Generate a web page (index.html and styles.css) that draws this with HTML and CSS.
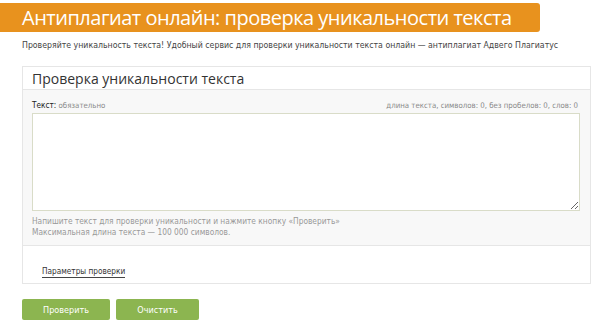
FILE: index.html
```html
<!DOCTYPE html>
<html lang="ru">
<head>
  <meta charset="UTF-8" />
  <title>Антиплагиат онлайн</title>
  <link rel="stylesheet" href="styles.css">
</head>
<body>

<h1 class="title">Антиплагиат онлайн: проверка уникальности текста</h1>
<p class="lead">Проверяйте уникальность текста! Удобный сервис для проверки уникальности текста онлайн — антиплагиат Адвего Плагиатус</p>

<div class="card">
  <div class="card-head">Проверка уникальности текста</div>
  <div class="card-body">
    <div class="field-top">
      <span class="label"><b>Текст:</b> обязательно</span>
      <span class="counter">длина текста, символов: 0, без пробелов: 0, слов: 0</span>
    </div>
    <textarea class="text" autofocus></textarea>
    <p class="hint">Напишите текст для проверки уникальности и нажмите кнопку «Проверить»<br>Максимальная длина текста — 100 000 символов.</p>
  </div>
  <div class="card-foot">
    <a href="#" class="params">Параметры проверки</a>
  </div>
</div>

<div class="actions">
  <button class="btn btn-check">Проверить</button>
  <button class="btn btn-clear">Очистить</button>
</div>

</body>
</html>
```

FILE: styles.css
```css
* { box-sizing: border-box; }
body {
  margin: 0;
  padding: 3px 6px 0 0;
  background: #fff;
  font-family: "DejaVu Sans Condensed", "DejaVu Sans", sans-serif;
  color: #333;
}
.title {
  margin: 0;
  width: 540px;
  height: 29px;
  padding: 0 0 0 22px;
  background: #e8921e;
  border-radius: 0 3px 3px 0;
  color: #fff;
  font-family: "Open Sans", sans-serif;
  font-weight: 400;
  font-size: 20px;
  line-height: 29px;
  letter-spacing: -0.5px;
  white-space: nowrap;
  overflow: hidden;
}
.lead {
  margin: 7px 0 0 22px;
  font-size: 8.7px;
  line-height: 12px;
  color: #444;
  white-space: nowrap;
}
.card {
  margin: 15px 0 0 22px;
  border: 1px solid #e6e6e6;
  background: #fff;
}
.card-head {
  height: 23px;
  padding: 0 0 0 9px;
  font-family: "Open Sans", sans-serif;
  font-size: 14px;
  line-height: 23px;
  color: #333;
  border-bottom: 1px solid #e6e6e6;
}
.card-body {
  background: #f8f8f8;
  padding: 8px 10px 7px 9px;
  border-bottom: 1px solid #e6e6e6;
}
.field-top {
  display: flex;
  justify-content: space-between;
  align-items: flex-end;
  height: 12px;
  font-size: 7.8px;
  color: #888;
}
.label b {
  font-weight: 400;
  color: #222;
  font-size: 8.2px;
}
.counter { padding-right: 2px; }
.text {
  display: block;
  width: 100%;
  height: 98px;
  margin: 3px 0 0;
  border: 1px solid #d9dcc8;
  background: #fff;
  resize: vertical;
  outline: none;
}
.hint {
  margin: 5px 0 0;
  font-size: 8.3px;
  line-height: 11px;
  color: #999;
}
.card-foot {
  height: 37px;
  padding: 13px 0 0 19px;
}
.params {
  font-size: 8.2px;
  color: #333;
  text-decoration: none;
  border-bottom: 1px solid #444;
  padding-bottom: 1px;
}
.actions {
  display: flex;
  gap: 6px;
  margin: 15px 0 0 22px;
}
.btn {
  height: 21px;
  border: none;
  border-radius: 2px;
  background: #8cb550;
  color: #fff;
  font-family: "DejaVu Sans Condensed", "DejaVu Sans", sans-serif;
  font-size: 9px;
  cursor: pointer;
}
.btn-check { width: 88px; }
.btn-clear { width: 83px; }
```
